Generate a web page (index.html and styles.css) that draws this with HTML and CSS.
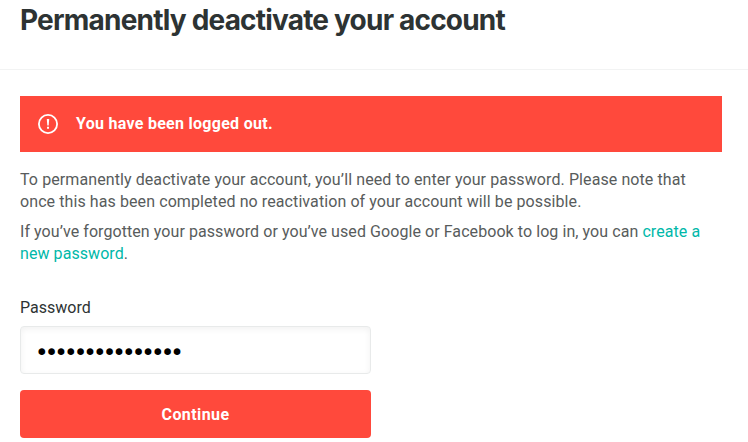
FILE: index.html
```html
<!DOCTYPE html>
<html lang="en">
<head>
    <meta charset="UTF-8">
    <meta name="viewport" content="width=device-width, initial-scale=1.0">
    <title>Permanently deactivate your account</title>
    <link rel="stylesheet" href="styles.css">
</head>
<body>
    <header class="page-header">
        <h1>Permanently deactivate your account</h1>
    </header>

    <main class="content">
        <div class="alert" role="alert">
            <svg class="alert-icon" width="20" height="20" viewBox="0 0 20 20" fill="none" stroke="#fff">
                <circle cx="10" cy="10" r="9.1" stroke-width="1.8"/>
                <path d="M8.8 5h2.4l-.5 6.4H9.3z" fill="#fff" stroke="none"/>
                <path d="M9 12.8h2v2H9z" fill="#fff" stroke="none"/>
            </svg>
            <span class="alert-text">You have been logged out.</span>
        </div>

        <div class="intro">
            <p class="note">To permanently deactivate your account, you’ll need to enter your password. Please note that<br>once this has been completed no reactivation of your account will be possible.</p>
            <p class="forgot">If you’ve forgotten your password or you’ve used Google or Facebook to log in, you can <a href="#">create a<br>new password</a>.</p>
        </div>

        <form class="deactivate-form">
            <label for="password">Password</label>
            <input id="password" type="password" value="passwordpasswor">
            <button type="submit">Continue</button>
        </form>
    </main>
</body>
</html>
```

FILE: styles.css
```css
* {
    box-sizing: border-box;
}
body {
    margin: 0;
    font-family: Roboto, sans-serif;
    font-size: 16px;
    line-height: 22px;
    color: #585c5c;
    background-color: #fff;
}
.page-header {
    height: 70px;
    padding: 4px 20px 0;
    border-bottom: 1px solid #f2f3f3;
}
h1 {
    margin: 0;
    font-family: Inter, sans-serif;
    font-size: 28px;
    font-weight: 700;
    line-height: 33px;
    letter-spacing: -0.8px;
    color: #2d3333;
    white-space: nowrap;
}
.content {
    padding: 26px 26px 0 20px;
}
.alert {
    display: flex;
    align-items: center;
    gap: 18px;
    height: 56px;
    padding: 0 18px;
    font-weight: 700;
    letter-spacing: 0.28px;
    color: #fff;
    background-color: #ff493c;
}
.intro {
    padding-top: 17px;
    white-space: nowrap;
}
p {
    margin: 0 0 8px;
}
.note {
    letter-spacing: 0.09px;
}
.forgot {
    letter-spacing: 0.07px;
}
a {
    color: #00b8a9;
    text-decoration: none;
}
.deactivate-form {
    display: flex;
    flex-direction: column;
    width: 351px;
    padding-top: 24px;
}
label {
    margin-bottom: 7px;
    color: #2d3333;
}
input {
    height: 48px;
    margin-bottom: 16px;
    padding: 4px 14px 0;
    font-family: "DejaVu Sans", sans-serif;
    font-size: 23px;
    letter-spacing: -3.9px;
    color: #000;
    border: 1px solid #e8eaea;
    border-radius: 4px;
    outline: none;
    box-shadow: inset 0 2px 6px rgba(0, 0, 0, 0.06);
}
button {
    height: 48px;
    font-family: Roboto, sans-serif;
    font-size: 16px;
    font-weight: 700;
    letter-spacing: 0.4px;
    color: #fff;
    background-color: #ff493c;
    border: none;
    border-radius: 4px;
    cursor: pointer;
}
```
